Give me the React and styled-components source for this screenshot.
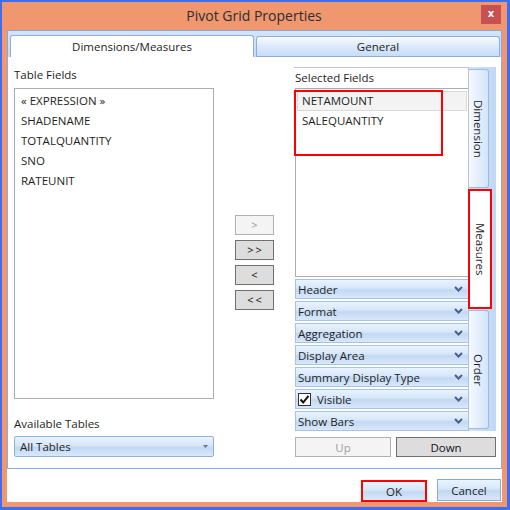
import React from 'react';
import styled, { createGlobalStyle } from 'styled-components';

const GlobalStyle = createGlobalStyle`
  body {
    margin: 0;
    background: #3c6df2;
    font-family: 'Open Sans', 'Noto Sans', sans-serif;
    font-size: 11.5px;
    color: #1e1e1e;
  }
  * { box-sizing: border-box; }
`;

const tableFields = ['« EXPRESSION »', 'SHADENAME', 'TOTALQUANTITY', 'SNO', 'RATEUNIT'];
const properties = ['Header', 'Format', 'Aggregation', 'Display Area', 'Summary Display Type', 'Visible', 'Show Bars'];

const blueGradient = 'linear-gradient(#eaf3fe 0%, #d6e6f9 45%, #c2d8f3 55%, #d9e8fa 100%)';

export default function App() {
  return (
    <>
      <GlobalStyle />
      <Window>
        <Frame>
          <TitleBar>
            <span />
            <Title>Pivot Grid Properties</Title>
            <CloseButton>x</CloseButton>
          </TitleBar>
          <Client>
            <TabHeader>
              <Tab selected>Dimensions/Measures</Tab>
              <Tab>General</Tab>
            </TabHeader>
            <TabBody>
              <LeftColumn>
                <Label>Table Fields</Label>
                <ListBox>
                  {tableFields.map((f) => (
                    <ListItem key={f}>{f}</ListItem>
                  ))}
                </ListBox>
                <Label $top={17}>Available Tables</Label>
                <Combo>
                  <span>All Tables</span>
                  <svg width="5" height="3" viewBox="0 0 5 3">
                    <polygon points="0,0 5,0 2.5,3" fill="#5f7597" />
                  </svg>
                </Combo>
              </LeftColumn>

              <MoveColumn>
                <MoveButton disabled>&gt;</MoveButton>
                <MoveButton>&gt;&gt;</MoveButton>
                <MoveButton>&lt;</MoveButton>
                <MoveButton>&lt;&lt;</MoveButton>
              </MoveColumn>

              <RightColumn>
                <SideTabs>
                  <Panel>
                    <PanelLabel>Selected Fields</PanelLabel>
                    <SelectedList>
                      <SelectedItem selected>NETAMOUNT</SelectedItem>
                      <SelectedItem>SALEQUANTITY</SelectedItem>
                      <Highlight />
                    </SelectedList>
                    {properties.map((p) => (
                      <PropRow key={p}>
                        {p === 'Visible' ? (
                          <CheckLabel>
                            <CheckBox>
                              <svg width="11" height="11" viewBox="0 0 11 11">
                                <path d="M1.5 5.5 L4.2 8.5 L9.5 1.8" fill="none" stroke="#111" strokeWidth="2" />
                              </svg>
                            </CheckBox>
                            Visible
                          </CheckLabel>
                        ) : (
                          <span>{p}</span>
                        )}
                        <svg width="9" height="6" viewBox="0 0 9 6">
                          <polyline points="1,1 4.5,4.5 8,1" fill="none" stroke="#46638f" strokeWidth="2" />
                        </svg>
                      </PropRow>
                    ))}
                  </Panel>
                  <Strip>
                    <SideTab>Dimension</SideTab>
                    <SideTab selected>Measures</SideTab>
                    <SideTab>Order</SideTab>
                  </Strip>
                </SideTabs>
                <OrderRow>
                  <GrayButton disabled $w={96}>Up</GrayButton>
                  <GrayButton $w={100}>Down</GrayButton>
                </OrderRow>
              </RightColumn>
            </TabBody>
            <Footer>
              <DialogButton $w={66} marked>OK</DialogButton>
              <DialogButton $w={64}>Cancel</DialogButton>
            </Footer>
          </Client>
        </Frame>
      </Window>
    </>
  );
}

const Window = styled.div`
  width: 510px;
  height: 510px;
  padding: 2px 3px 3px 2px;
  background: #3c6df2;
`;

const Frame = styled.div`
  height: 100%;
  display: flex;
  flex-direction: column;
  padding: 0 5px 5px 5px;
  background: #f0976f;
`;

const TitleBar = styled.div`
  height: 28px;
  flex: none;
  display: grid;
  grid-template-columns: 1fr auto 1fr;
  align-items: start;
`;

const Title = styled.div`
  font-size: 14px;
  line-height: 28px;
  color: #2e2e2e;
  padding-right: 1px;
`;

const CloseButton = styled.div`
  justify-self: end;
  margin: 3px 1px 0 0;
  width: 20px;
  height: 19px;
  background: #c75050;
  color: #fff;
  font-family: 'DejaVu Sans', sans-serif;
  font-weight: bold;
  font-size: 10px;
  line-height: 18px;
  text-align: center;
`;

const Client = styled.div`
  flex: 1;
  display: flex;
  flex-direction: column;
  background: #fff;
`;

const TabHeader = styled.div`
  height: 27px;
  flex: none;
  display: flex;
  align-items: flex-end;
  gap: 2px;
  padding: 4px 1px 0 2px;
  border: 1px solid #86a7d4;
  border-bottom: none;
  background: linear-gradient(#d3e4f8, #c4daf4);
`;

const Tab = styled.div`
  width: 244px;
  height: ${(p) => (p.selected ? '22px' : '21px')};
  display: flex;
  align-items: center;
  justify-content: center;
  border: 1px solid #8eafd9;
  border-bottom: ${(p) => (p.selected ? 'none' : '1px solid #8cadda')};
  border-radius: 3px 3px 0 0;
  background: ${(p) => (p.selected ? '#fff' : 'linear-gradient(#f7fbff, #dce9fa 50%, #c8ddf7)')};
`;

const TabBody = styled.div`
  flex: 1;
  display: flex;
  gap: 20px;
  padding: 10px 5px 11px 6px;
  border: 1px solid #8cadda;
  border-top: none;
`;

const LeftColumn = styled.div`
  width: 200px;
  display: flex;
  flex-direction: column;
  margin-right: 1px;
`;

const Label = styled.div`
  height: 16px;
  line-height: 16px;
  margin-top: ${(p) => p.$top || 0}px;
  margin-bottom: ${(p) => (p.$top ? 4 : 5)}px;
`;

const ListBox = styled.div`
  flex: 1;
  border: 1px solid #abadb3;
  padding: 2px 0 0 6px;
`;

const ListItem = styled.div`
  height: 20px;
  line-height: 20px;
`;

const Combo = styled.div`
  height: 21px;
  flex: none;
  display: flex;
  align-items: center;
  justify-content: space-between;
  padding: 0 5px 0 5px;
  border: 1px solid #8eb0dc;
  border-radius: 2px;
  background: ${blueGradient};
  svg { margin-top: -1px; }
`;

const MoveColumn = styled.div`
  width: 39px;
  display: flex;
  flex-direction: column;
  justify-content: center;
  gap: 5px;
`;

const MoveButton = styled.div`
  height: 20px;
  display: flex;
  align-items: center;
  justify-content: center;
  letter-spacing: 2px;
  padding-left: 2px;
  font-size: 11px;
  border: 1px solid ${(p) => (p.disabled ? '#adb2b5' : '#707070')};
  background: ${(p) => (p.disabled ? '#f4f4f4' : '#dddddd')};
  color: ${(p) => (p.disabled ? '#9a9a9a' : '#111')};
`;

const RightColumn = styled.div`
  width: 202px;
  display: flex;
  flex-direction: column;
  gap: 6px;
`;

const SideTabs = styled.div`
  flex: 1;
  display: flex;
`;

const Panel = styled.div`
  width: 175px;
  display: flex;
  flex-direction: column;
  gap: 2px;
  border-top: 1px solid #c4c4c4;
  border-right: 1px solid #c4c4c4;
  padding-left: 1px;
`;

const PanelLabel = styled.div`
  height: 20px;
  line-height: 19px;
  margin-bottom: -2px;
`;

const SelectedList = styled.div`
  flex: 1;
  position: relative;
  border: 1px solid #abadb3;
  border-right: none;
  padding: 2px 1px 0 1px;
`;

const SelectedItem = styled.div`
  height: 20px;
  line-height: 18px;
  padding-left: 4px;
  border: 1px solid ${(p) => (p.selected ? '#dadada' : 'transparent')};
  background: ${(p) => (p.selected ? '#f3f3f3' : 'transparent')};
`;

const Highlight = styled.div`
  position: absolute;
  left: -2px;
  top: 1px;
  width: 149px;
  height: 66px;
  border: 2px solid #ff0000;
`;

const PropRow = styled.div`
  height: 20px;
  flex: none;
  display: flex;
  align-items: center;
  justify-content: space-between;
  padding: 0 5px 0 2px;
  margin-right: -1px;
  border: 1px solid #a7c2e6;
  background: ${blueGradient};
  svg { flex: none; }
`;

const CheckLabel = styled.span`
  display: flex;
  align-items: center;
  gap: 6px;
`;

const CheckBox = styled.span`
  width: 13px;
  height: 13px;
  display: flex;
  align-items: center;
  justify-content: center;
  border: 1px solid #333;
  background: #fff;
`;

const Strip = styled.div`
  width: 27px;
  display: flex;
  flex-direction: column;
  padding-top: 2px;
  background: linear-gradient(90deg, #cfe2f8, #c1d8f4);
`;

const SideTab = styled.div`
  height: ${(p) => (p.selected ? '120px' : '119px')};
  width: ${(p) => (p.selected ? '24px' : '20px')};
  margin: ${(p) => (p.selected ? '1px 0 1px -1px' : '0')};
  display: flex;
  align-items: center;
  justify-content: center;
  writing-mode: vertical-rl;
  border: ${(p) => (p.selected ? '2px solid #ff0000' : '1px solid #9dbbe2')};
  border-left: ${(p) => (p.selected ? '2px solid #ff0000' : 'none')};
  border-radius: ${(p) => (p.selected ? '0' : '0 3px 3px 0')};
  background: ${(p) => (p.selected ? '#fff' : 'linear-gradient(90deg, #f5f9ff, #d3e5f9)')};
`;

const OrderRow = styled.div`
  height: 20px;
  flex: none;
  display: flex;
  gap: 5px;
  margin-left: 1px;
`;

const GrayButton = styled.div`
  width: ${(p) => p.$w}px;
  display: flex;
  align-items: center;
  justify-content: center;
  border: 1px solid ${(p) => (p.disabled ? '#adb2b5' : '#707070')};
  background: ${(p) => (p.disabled ? '#f4f4f4' : '#dddddd')};
  color: ${(p) => (p.disabled ? '#a0a0a0' : '#111')};
`;

const Footer = styled.div`
  height: 33px;
  flex: none;
  display: flex;
  justify-content: flex-end;
  align-items: flex-start;
  gap: 10px;
  padding: 10px 1px 0 0;
`;

const DialogButton = styled.div`
  width: ${(p) => p.$w}px;
  height: 22px;
  display: flex;
  align-items: center;
  justify-content: center;
  border: ${(p) => (p.marked ? '2px solid #ff0000' : '1px solid #8aaad6')};
  background: ${blueGradient};
  margin-top: ${(p) => (p.marked ? '1px' : '0')};
`;
